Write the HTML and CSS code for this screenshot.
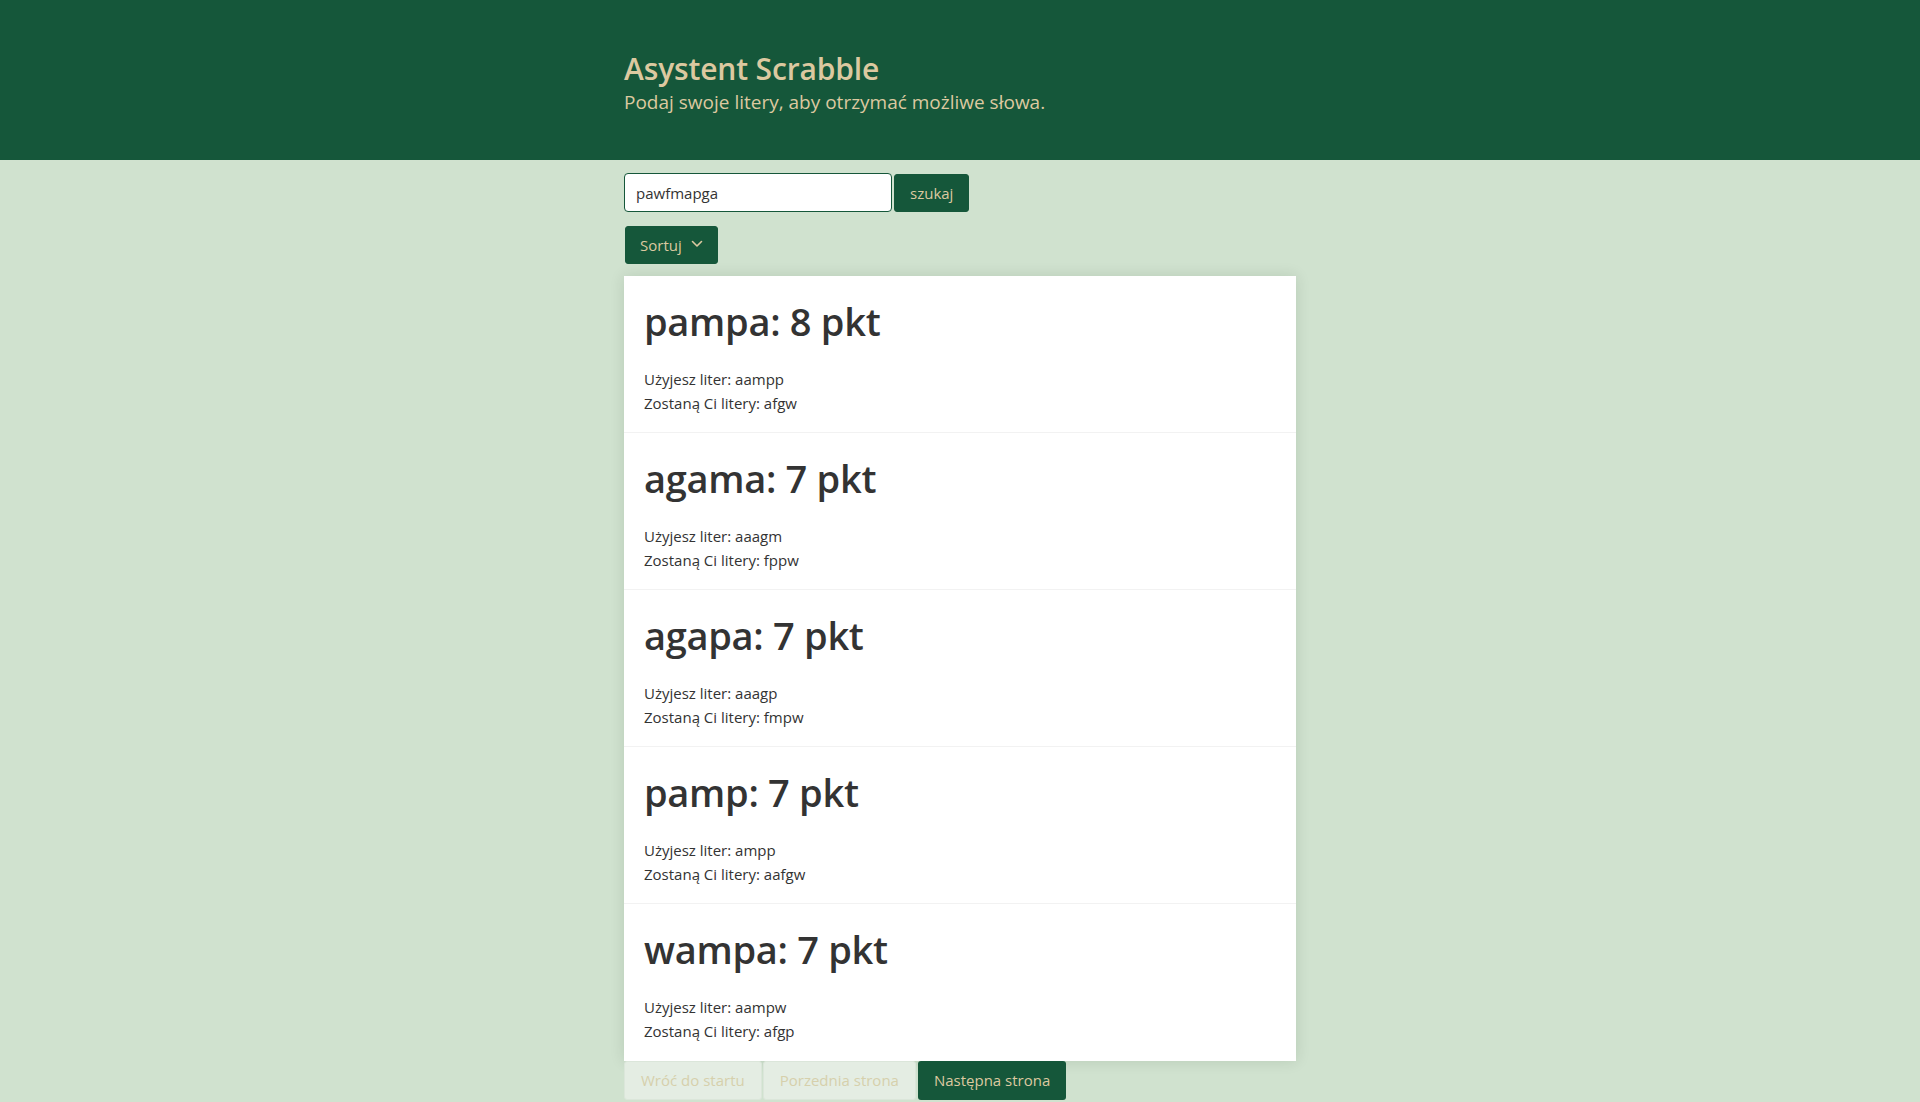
FILE: index.html
```html
<!DOCTYPE html>
<html lang="pl">
<head>
<meta charset="utf-8">
<title>Asystent Scrabble</title>
<link rel="stylesheet" href="styles.css">
</head>
<body>
<header class="hero">
  <div class="container">
    <h1 class="hero-title">Asystent Scrabble</h1>
    <p class="hero-lead">Podaj swoje litery, aby otrzymać możliwe słowa.</p>
  </div>
</header>
<main class="container">
  <form class="search">
    <input class="search-input" type="text" value="pawfmapga">
    <button class="btn" type="button">szukaj</button>
  </form>
  <div class="sort-row">
    <button class="btn btn-sort" type="button">Sortuj
      <svg class="chev" width="12" height="8" viewBox="0 0 12 8"><path d="M1.5 1.5 L6 6 L10.5 1.5" fill="none" stroke="currentColor" stroke-width="1.6" stroke-linecap="round" stroke-linejoin="round"/></svg>
    </button>
  </div>
  <ul class="results">
    <li class="result">
      <h2 class="word">pampa: 8 pkt</h2>
      <p class="info">Użyjesz liter: aampp<br>Zostaną Ci litery: afgw</p>
    </li>
    <li class="result">
      <h2 class="word">agama: 7 pkt</h2>
      <p class="info">Użyjesz liter: aaagm<br>Zostaną Ci litery: fppw</p>
    </li>
    <li class="result">
      <h2 class="word">agapa: 7 pkt</h2>
      <p class="info">Użyjesz liter: aaagp<br>Zostaną Ci litery: fmpw</p>
    </li>
    <li class="result">
      <h2 class="word">pamp: 7 pkt</h2>
      <p class="info">Użyjesz liter: ampp<br>Zostaną Ci litery: aafgw</p>
    </li>
    <li class="result">
      <h2 class="word">wampa: 7 pkt</h2>
      <p class="info">Użyjesz liter: aampw<br>Zostaną Ci litery: afgp</p>
    </li>
  </ul>
  <nav class="pager">
    <span class="page disabled">Wróć do startu</span>
    <span class="page disabled">Porzednia strona</span>
    <span class="page active">Następna strona</span>
  </nav>
</main>
</body>
</html>
```
FILE: styles.css
```css
* { box-sizing: border-box; }
html, body { margin: 0; padding: 0; }
body {
  background: #d0e2cf;
  font-family: "Segoe UI", "Open Sans", "DejaVu Sans", sans-serif;
  font-size: 16px;
  line-height: 1.5;
  color: #333;
  overflow: hidden;
}
.container {
  width: 672px;
  margin: 0 auto;
}
.hero {
  background: #15573a;
  height: 160px;
  padding-top: 49px;
  color: #dcc9a0;
}
.hero-title {
  margin: 0;
  font-size: 30px;
  font-weight: 600;
  line-height: 40px;
  letter-spacing: -0.15px;
}
.hero-lead {
  margin: 0;
  font-size: 19px;
  line-height: 26px;
}
.search {
  display: flex;
  gap: 2px;
  padding-top: 13px;
  margin: 0;
}
.search-input {
  width: 268px;
  height: 39px;
  border: 1px solid #15573a;
  border-radius: 4px;
  padding: 0 11px;
  font-family: inherit;
  font-size: 15px;
  color: #333;
  background: #fff;
  outline: none;
}
.btn {
  background: #15573a;
  color: #dcc9a0;
  border: 1px solid #15573a;
  border-radius: 3px;
  font-family: inherit;
  font-size: 15px;
  height: 38px;
  padding: 0 15px;
  margin-top: 1px;
  cursor: pointer;
}
.sort-row {
  padding-top: 14px;
  padding-left: 1px;
  display: flex;
}
.btn.btn-sort {
  margin: 0;
  width: 93px;
  display: flex;
  align-items: center;
  gap: 9px;
  padding: 0 14px;
}
.chev { display: block; margin-top: -2px; }
.results {
  list-style: none;
  margin: 12px 0 0;
  padding: 0;
  background: #fff;
  box-shadow: 0 0 14px rgba(0, 40, 20, 0.12);
}
.result {
  height: 157px;
  padding: 21px 20px 0;
  border-bottom: 1px solid #f2f2f2;
}
.result:last-child { border-bottom: 0; }
.word {
  margin: 0 0 23px;
  font-size: 38px;
  font-weight: 600;
  line-height: 48px;
  letter-spacing: -0.3px;
  color: #333;
}
.info {
  margin: 0;
  font-size: 15px;
  line-height: 23.5px;
}
.pager {
  display: flex;
  gap: 1px;
  height: 40px;
}
.page {
  display: flex;
  align-items: center;
  height: 39px;
  padding: 0 16px;
  font-size: 15px;
  border-radius: 3px;
}
.page.disabled {
  background: #e4ede3;
  color: #d6d0ac;
  border: 1px solid #dbe6da;
}
.page.active {
  background: #15573a;
  color: #dcc9a0;
  margin-left: 1px;
}
```
